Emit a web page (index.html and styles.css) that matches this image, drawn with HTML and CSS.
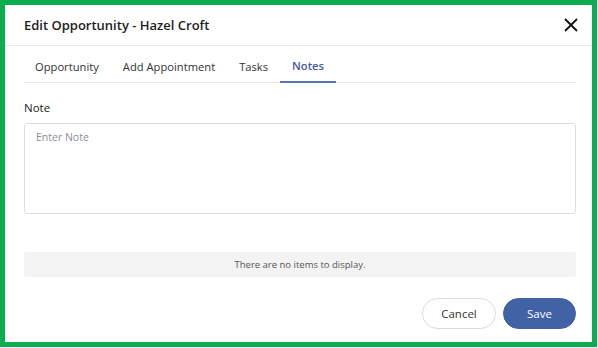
FILE: index.html
```html
<!DOCTYPE html>
<html lang="en">
<head>
    <meta charset="UTF-8">
    <meta name="viewport" content="width=device-width, initial-scale=1.0">
    <title>Edit Opportunity - Hazel Croft</title>
    <link rel="stylesheet" href="styles.css">
</head>
<body>

<div class="frame">
    <div class="modal-header">
        <h2>Edit Opportunity - Hazel Croft</h2>
        <button class="close-btn" aria-label="Close">
            <svg width="14" height="14" viewBox="0 0 14 14">
                <path d="M1 1 L13 13 M13 1 L1 13" stroke="#111" stroke-width="1.8" fill="none"/>
            </svg>
        </button>
    </div>

    <div class="modal-body">
        <div class="tabs">
            <span class="tab">Opportunity</span>
            <span class="tab">Add Appointment</span>
            <span class="tab">Tasks</span>
            <span class="tab active">Notes</span>
        </div>

        <label class="field-label" for="note">Note</label>
        <textarea id="note" placeholder="Enter Note"></textarea>

        <div class="empty-list">There are no items to display.</div>

        <div class="actions">
            <button class="btn btn-cancel">Cancel</button>
            <button class="btn btn-save">Save</button>
        </div>
    </div>
</div>

</body>
</html>
```

FILE: styles.css
```css
body {
    margin: 0;
    padding: 0;
    background-color: #fff;
    font-family: "Open Sans", Arial, sans-serif;
    color: #222;
}
.frame {
    box-sizing: border-box;
    width: 597px;
    height: 347px;
    border: 5px solid #0bad4f;
    background: #fff;
}
.modal-header {
    display: flex;
    align-items: center;
    justify-content: space-between;
    height: 40px;
    padding: 0 14px 0 19px;
    border-bottom: 1px solid #e8e8ef;
}
.modal-header h2 {
    margin: 0;
    font-size: 13px;
    font-weight: 600;
    color: #1e1e1e;
}
.close-btn {
    border: none;
    background: none;
    padding: 0;
    width: 14px;
    height: 14px;
    cursor: pointer;
}
.close-btn svg {
    display: block;
}
.modal-body {
    padding: 0 16px 0 19px;
}
.tabs {
    display: flex;
    height: 36px;
    border-bottom: 1px solid #e6e6ee;
}
.tab {
    display: flex;
    align-items: center;
    padding: 4px 12px 0;
    font-size: 11.2px;
    color: #333;
}
.tab:first-child {
    padding-left: 11px;
}
.tab.active {
    color: #44599e;
    font-weight: 600;
    border-bottom: 2px solid #5a72b5;
    margin-bottom: -1px;
}
.field-label {
    display: block;
    margin-top: 17px;
    font-size: 11.5px;
    color: #222;
}
textarea {
    display: block;
    box-sizing: border-box;
    width: 100%;
    height: 91px;
    margin-top: 8px;
    padding: 6px 11px;
    border: 1px solid #dcdde3;
    border-radius: 3px;
    font-family: inherit;
    font-size: 10.5px;
    resize: none;
}
textarea::placeholder {
    color: #8a8d99;
}
.empty-list {
    margin-top: 38px;
    height: 25px;
    line-height: 25px;
    background: #f3f3f3;
    border-radius: 3px;
    text-align: center;
    font-size: 9.5px;
    color: #555;
}
.actions {
    display: flex;
    justify-content: flex-end;
    gap: 7px;
    margin-top: 21px;
}
.btn {
    height: 31px;
    border-radius: 16px;
    font-family: inherit;
    font-size: 11.5px;
    cursor: pointer;
}
.btn-cancel {
    width: 74px;
    background: #fff;
    border: 1px solid #d9dce6;
    color: #333;
}
.btn-save {
    width: 73px;
    background: #4262a6;
    border: 1px solid #4262a6;
    color: #fff;
    font-weight: 500;
}
```
